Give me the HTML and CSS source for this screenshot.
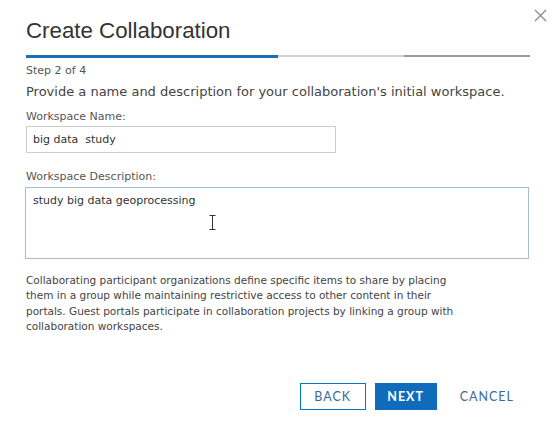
FILE: index.html
```html
<!DOCTYPE html>
<html>
<head>
<meta charset="utf-8">
<link rel="stylesheet" href="styles.css">
</head>
<body>
<div class="dialog">
  <button class="close" aria-label="Close">
    <svg width="13" height="13" viewBox="0 0 13 13"><path d="M1 1L12 12M12 1L1 12" stroke="#8a8a8a" stroke-width="1.3" fill="none"/></svg>
  </button>
  <h1 class="title">Create Collaboration</h1>
  <div class="progress">
    <span class="seg done"></span><span class="seg done"></span><span class="seg light"></span><span class="seg dark"></span>
  </div>
  <div class="step">Step 2 of 4</div>
  <p class="lead">Provide a name and description for your collaboration's initial workspace.</p>
  <label class="label">Workspace Name:</label>
  <div class="input">big data&nbsp; study</div>
  <label class="label desc-label">Workspace Description:</label>
  <div class="textarea">study big data geoprocessing
    <svg class="ibeam" width="7" height="15" viewBox="0 0 7 15"><path d="M0.5 0.5H6.5M3.5 0.5V14.5M0.5 14.5H6.5" stroke="#333" stroke-width="1" fill="none"/></svg>
  </div>
  <p class="info">Collaborating participant organizations define specific items to share by placing them in a group while maintaining restrictive access to other content in their portals. Guest portals participate in collaboration projects by linking a group with collaboration workspaces.</p>
  <div class="actions">
    <button class="btn back">BACK</button>
    <button class="btn next">NEXT</button>
    <button class="btn cancel">CANCEL</button>
  </div>
</div>
</body>
</html>
```
FILE: styles.css
```css
html, body { margin: 0; padding: 0; background: #fff; }
body { width: 554px; height: 444px; overflow: hidden; font-family: "DejaVu Sans", Verdana, sans-serif; color: #444; }
.dialog { position: relative; padding: 0 24px 0 26px; }
.close { position: absolute; top: 9px; right: 7px; border: 0; background: none; padding: 0; cursor: pointer; }
.title { margin: 0; padding-top: 17px; font-family: "Liberation Sans", Arial, sans-serif; font-weight: normal; font-size: 22.3px; line-height: 28px; color: #333; }
.progress { display: flex; margin-top: 10px; height: 3px; }
.seg { flex: 1; height: 3px; }
.seg.done { background: #1a6fb5; }
.seg.light { background: #cfcfcf; height: 2px; }
.seg.dark { background: #9d9d9d; height: 2px; }
.step { margin-top: 6px; font-size: 11px; line-height: 14px; color: #555; }
.lead { margin: 6px 0 0; font-size: 13px; line-height: 16px; color: #444; }
.label { display: block; margin-top: 10px; font-size: 11px; line-height: 14px; color: #555; }
.input { margin-top: 2px; width: 296px; height: 25px; border: 1px solid #ccc; padding: 0 6px; font-size: 11px; line-height: 25px; color: #333; }
.desc-label { margin-top: 17px; }
.textarea { position: relative; margin-top: 3px; margin-left: -1px; width: 488px; height: 58px; border: 1px solid #a7bcd6; padding: 6px 7px; font-size: 11px; line-height: 14px; color: #333; }
.ibeam { position: absolute; left: 183px; top: 27px; }
.info { margin: 14px 0 0; width: 440px; font-size: 10.5px; line-height: 15.4px; color: #444; }
.actions { display: flex; justify-content: flex-end; align-items: center; margin-top: 48px; padding-right: 15px; }
.btn { font-family: Lato, sans-serif; font-size: 12.5px; letter-spacing: 1px; height: 27px; padding: 0; border: 1px solid #0079c1; background: #fff; color: #3a6a9c; cursor: pointer; text-align: center; }
.btn.back { width: 66px; }
.btn.next { width: 62px; margin-left: 9px; background: #0f6cbd; border-color: #0f6cbd; color: #fff; font-weight: bold; }
.btn.cancel { border-color: transparent; background: none; margin-left: 22px; padding: 0; }
```
